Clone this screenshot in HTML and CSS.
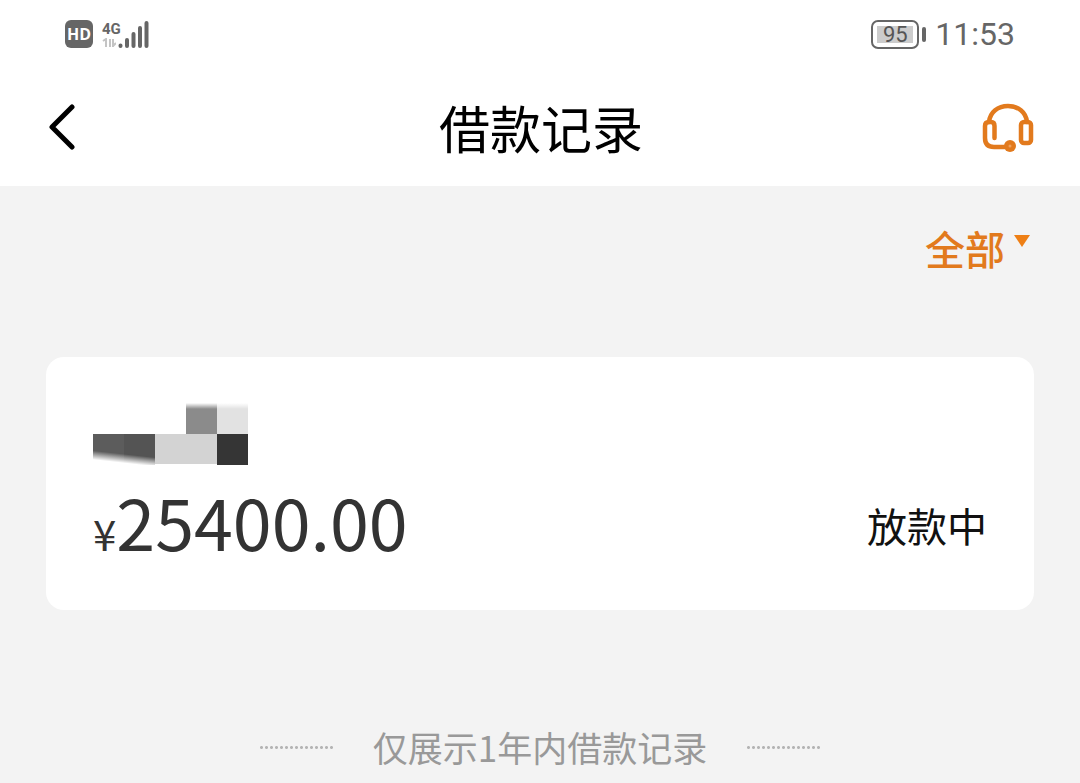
FILE: index.html
```html
<!DOCTYPE html>
<html lang="zh-CN">
<head>
    <meta charset="UTF-8">
    <meta name="viewport" content="width=device-width, initial-scale=1.0">
    <title>借款记录</title>
    <link rel="stylesheet" href="styles.css">
</head>
<body>
    <div class="status-bar">
        <div class="status-left">
            <span class="hd">HD</span>
            <div class="network">
                <span class="network-type">4G</span>
                <svg width="14" height="10" viewBox="0 0 14 10">
                    <path d="M1 3 L4 1 V9 M8 1 V9 M11 9 V1 M11 8 L14 5" fill="none" stroke="#c4c4c4" stroke-width="2"/>
                </svg>
            </div>
            <svg class="signal" width="31" height="29" viewBox="0 0 31 29">
                <path d="M2.500 26 V25.500 M9 26 V20 M15.500 26 V14 M22 26 V8 M28.500 26 V3" fill="none" stroke="#666" stroke-width="4" stroke-linecap="round"/>
            </svg>
        </div>
        <div class="status-right">
            <div class="battery"><span class="battery-level">95</span></div>
            <span class="battery-tip"></span>
            <span class="time">11:53</span>
        </div>
    </div>
    <header class="header">
        <button class="icon-btn" aria-label="返回">
            <svg width="28" height="46" viewBox="0 0 28 46">
                <path d="M24 3 L4 23 L24 43" fill="none" stroke="#000" stroke-width="5" stroke-linecap="round" stroke-linejoin="round"/>
            </svg>
        </button>
        <h1>借款记录</h1>
        <button class="icon-btn" aria-label="客服">
            <svg width="52" height="50" viewBox="0 0 52 50">
                <g fill="none" stroke="#e27a1d" stroke-width="4.500" stroke-linecap="round" stroke-linejoin="round">
                    <path d="M7 20 C8 10 16 4 26 4 C36 4 44 10 45 20"/>
                    <path d="M12.500 36 V24 Q12.500 20 9 20 H7 Q3 20 3 24 V36 Q3 45 12 45 H24"/>
                    <rect x="39" y="20" width="10" height="21" rx="3"/>
                </g>
                <circle cx="28" cy="44" r="6" fill="#e27a1d"/>
                <circle cx="28" cy="44" r="1.500" fill="#efa25e"/>
            </svg>
        </button>
    </header>
    <main>
        <button class="filter">
            全部
            <svg width="16" height="12" viewBox="0 0 16 12"><path d="M0 0 H16 L8 12 Z" fill="#ee7f15"/></svg>
        </button>
        <section class="card">
            <svg width="155" height="62" viewBox="0 0 155 62">
                <defs>
                    <linearGradient id="fadeTop" x1="0" y1="0" x2="0" y2="1">
                        <stop offset="0" stop-color="#fff"/>
                        <stop offset="1" stop-color="#fff" stop-opacity="0"/>
                    </linearGradient>
                    <linearGradient id="fadeBottom" gradientUnits="userSpaceOnUse" x1="31" y1="51" x2="30" y2="60">
                        <stop offset="0" stop-color="#fff" stop-opacity="0"/>
                        <stop offset="1" stop-color="#fff"/>
                    </linearGradient>
                </defs>
                <rect x="93" y="0" width="31" height="31" fill="#8b8b8b"/>
                <rect x="124" y="0" width="31" height="31" fill="#e2e2e2"/>
                <rect x="93" y="0" width="62" height="6" fill="url(#fadeTop)"/>
                <rect x="0" y="31" width="31" height="31" fill="#5c5c5c"/>
                <rect x="31" y="31" width="31" height="31" fill="#545454"/>
                <rect x="0" y="31" width="62" height="31" fill="url(#fadeBottom)"/>
                <rect x="62" y="31" width="62" height="30" fill="#d3d3d3"/>
                <rect x="124" y="31" width="31" height="31" fill="#353535"/>
            </svg>
            <div class="card-row">
                <div class="amount"><span class="currency">¥</span>25400.00</div>
                <span class="state">放款中</span>
            </div>
        </section>
        <p class="tip">仅展示1年内借款记录</p>
    </main>
</body>
</html>
```
FILE: styles.css
```css
* {
    box-sizing: border-box;
}
body {
    margin: 0;
    min-height: 100vh;
    display: flex;
    flex-direction: column;
    background: #fff;
    color: #000;
    font-family: "Noto Sans CJK SC", sans-serif;
}
button {
    padding: 0;
    border: 0;
    background: none;
    font-family: inherit;
    cursor: pointer;
}
svg {
    display: block;
}

/* Status bar */
.status-bar {
    display: flex;
    justify-content: space-between;
    align-items: center;
    height: 68px;
    padding: 0 65px;
    color: #666;
}
.status-left, .status-right {
    display: flex;
    align-items: center;
}
.hd {
    width: 28px;
    border-radius: 6px;
    background: #666;
    color: #fff;
    font: bold 16px/28px "Open Sans", sans-serif;
    text-align: center;
}
.network {
    margin-left: 9px;
    width: 16px;
}
.network-type {
    display: block;
    font: bold 15px/18px Roboto, sans-serif;
}
.battery {
    width: 48px;
    height: 29px;
    padding: 4px;
    border: 2px solid #666;
    border-radius: 7px;
}
.battery-level {
    display: block;
    background: #ccc;
    color: #555;
    font: 22px/17px Roboto, sans-serif;
    text-align: center;
}
.battery-tip {
    width: 4px;
    height: 15px;
    margin: 0 9px 0 3px;
    border-radius: 2px;
    background: #666;
}
.time {
    font: 32px/40px Roboto, sans-serif;
}

/* Header */
.header {
    display: flex;
    justify-content: space-between;
    align-items: center;
    height: 118px;
    padding: 0 46px 0 48px;
}
.icon-btn {
    display: flex;
    width: 52px;
}
.header h1 {
    margin: 0;
    font-size: 51px;
    font-weight: 400;
    line-height: 76px;
}

/* Records */
main {
    flex: 1;
    display: flex;
    flex-direction: column;
    padding: 34px 46px 0;
    background: #f3f3f3;
}
.filter {
    align-self: flex-end;
    display: flex;
    gap: 9px;
    padding-right: 4px;
    color: #e27a1d;
    font-size: 40px;
    font-weight: 500;
    line-height: 56px;
}
.filter svg {
    margin-top: 15px;
}
.card {
    margin-top: 81px;
    padding: 46px 47px 44px;
    border-radius: 18px;
    background: #fff;
}
.card-row {
    display: flex;
    justify-content: space-between;
    align-items: flex-end;
    margin-top: 11px;
}
.amount {
    color: #333;
    font-size: 70px;
    line-height: 90px;
}
.currency {
    font-size: 42px;
    line-height: 1;
}
.state {
    color: #111;
    font-size: 40px;
    line-height: 82px;
}
.tip {
    display: flex;
    justify-content: center;
    align-items: center;
    gap: 39px;
    margin: 112px 0 10px;
    color: #999;
    font-size: 35px;
    line-height: 50px;
}
.tip::before, .tip::after {
    content: "";
    width: 75px;
    height: 3px;
    background: radial-gradient(circle, #b4b4b4 1px, transparent 2px) 0 0 / 5px 3px;
}
```
